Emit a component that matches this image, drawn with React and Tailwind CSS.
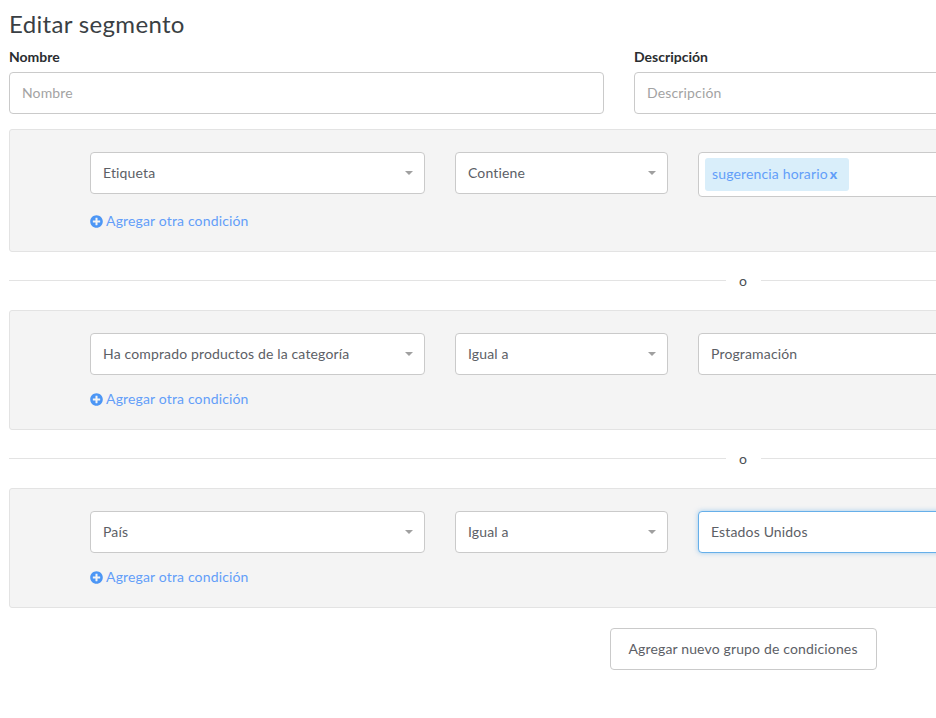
import React from "react";
import { FaPlusCircle } from "react-icons/fa";

const font = "[font-family:Lato,'Noto_Sans',sans-serif]";

function Caret() {
  return (
    <svg width="8" height="4" viewBox="0 0 8 4" className="absolute right-[11px] top-[18px]">
      <path d="M0 0h8L4 4z" fill="#a0a0a0" />
    </svg>
  );
}

function Select({ value, width }) {
  return (
    <div className={`relative ${width} h-[42px] shrink-0 rounded-[4px] border border-[#cacaca] bg-white pl-3 pb-[2px] flex items-center text-[14px] tracking-[0.15px] text-[#5c6066]`}>
      {value}
      <Caret />
    </div>
  );
}

function AddLink() {
  return (
    <div className="flex items-center gap-[3px] h-[21px] mt-[14px] text-[14px] tracking-[0.15px] text-[#639ef9]">
      <FaPlusCircle className="w-[13px] h-[13px] text-[#4c96f5]" />
      <span className="pb-[2px]">Agregar otra condición</span>
    </div>
  );
}

function Panel({ first, second, children }) {
  return (
    <div className="rounded-[3px] border border-[#e3e3e3] bg-[#f4f4f4] pt-[22px] pb-[19px] pl-[80px]">
      <div className="flex items-start gap-[30px]">
        <Select value={first} width="w-[335px]" />
        <Select value={second} width="w-[213px]" />
        {children}
      </div>
      <AddLink />
    </div>
  );
}

function Divider() {
  return (
    <div className="flex items-center h-[58px] gap-[13px]">
      <div className="h-px flex-1 bg-[#e3e3e3] -translate-y-px" />
      <span className="pb-[2px] text-[14px] text-[#4a4f54] w-[9px] text-center">o</span>
      <div className="h-px flex-1 bg-[#e3e3e3] -translate-y-px" />
    </div>
  );
}

const valueBox = "w-[771px] shrink-0 rounded-[4px] border bg-white";

export default function App() {
  return (
    <div className={`w-[936px] h-[718px] overflow-hidden bg-white ${font}`}>
      <div className="w-[1486px] px-[9px]">
        <h1 className="pt-[7px] h-[42px] text-[24px] leading-[34px] tracking-[0.33px] text-[#3a3f44]">Editar segmento</h1>
        <div className="flex gap-[30px]">
          <div className="w-[595px]">
            <label className="block h-[30px] leading-[30px] text-[14px] font-bold text-[#2a2d30]">Nombre</label>
            <input readOnly placeholder="Nombre" className="block w-full h-[42px] rounded-[4px] border border-[#cacaca] px-3 pb-[2px] text-[14px] tracking-[0.15px] outline-none placeholder:text-[#a3a3a3]" />
          </div>
          <div className="flex-1">
            <label className="block h-[30px] leading-[30px] text-[14px] font-bold text-[#2a2d30]">Descripción</label>
            <input readOnly placeholder="Descripción" className="block w-full h-[42px] rounded-[4px] border border-[#cacaca] px-3 pb-[2px] text-[14px] tracking-[0.15px] outline-none placeholder:text-[#a3a3a3]" />
          </div>
        </div>
        <div className="mt-[15px]">
          <Panel first="Etiqueta" second="Contiene">
            <div className={`${valueBox} h-[45px] border-[#cacaca] pl-[6px] pt-[5px]`}>
              <span className="flex items-center h-[33px] w-[144px] rounded-[3px] bg-[#d9eefa] pl-[7px] pb-[2px] text-[14px] tracking-[0.15px] text-[#639ef9]">
                sugerencia horario
                <span className="ml-[2px] font-black">x</span>
              </span>
            </div>
          </Panel>
          <Divider />
          <Panel first="Ha comprado productos de la categoría" second="Igual a">
            <div className={`${valueBox} h-[42px] border-[#cacaca] pl-3 pb-[2px] flex items-center text-[14px] tracking-[0.15px] text-[#5c6066]`}>Programación</div>
          </Panel>
          <Divider />
          <Panel first="País" second="Igual a">
            <div className={`${valueBox} h-[42px] border-[#66afe9] shadow-[0_0_5px_rgba(102,175,233,0.6)] pl-3 pb-[2px] flex items-center text-[14px] tracking-[0.15px] text-[#5c6066]`}>Estados Unidos</div>
          </Panel>
        </div>
        <div className="flex justify-center mt-[20px]">
          <button className="w-[267px] h-[42px] rounded-[4px] border border-[#cacaca] bg-white pb-[2px] text-[14px] tracking-[0.15px] text-[#5c6066]">Agregar nuevo grupo de condiciones</button>
        </div>
      </div>
    </div>
  );
}
